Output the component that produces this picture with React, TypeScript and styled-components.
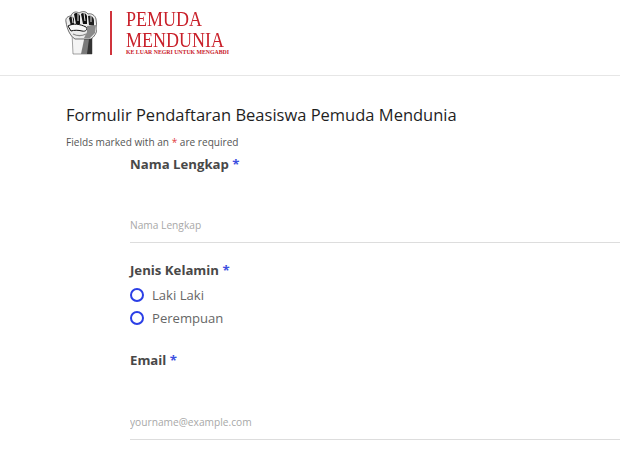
import React from 'react';
import styled, { createGlobalStyle } from 'styled-components';

const GlobalStyle = createGlobalStyle`
    html, body {
        margin: 0;
        padding: 0;
        background: #fff;
        overflow: hidden;
    }
    body {
        font-family: "Open Sans", "Liberation Sans", sans-serif;
    }
`;

const Page = styled.div`
    width: 620px;
    height: 450px;
    overflow: hidden;
`;

const Header = styled.header`
    height: 76px;
    box-sizing: border-box;
    border-bottom: 1px solid #e6e6e6;
    padding: 9px 0 0 65px;
    display: flex;
    align-items: flex-start;
`;

const Fist = styled.svg`
    width: 32px;
    height: 44px;
    margin-top: 2px;
    flex: none;
    filter: blur(0.35px);
`;

const Divider = styled.div`
    width: 2px;
    height: 44px;
    margin: 2px 14px 0 13px;
    background: #d0343c;
`;

const Brand = styled.div`
    color: #c9202a;
    font-family: "Liberation Serif", serif;
    display: flex;
    flex-direction: column;
    gap: 4px;
    padding-top: 2px;
`;

const BrandLine = styled.div`
    font-size: 20px;
    line-height: 17px;
    transform: scaleX(0.9);
    transform-origin: left center;
`;

const BrandTag = styled.div`
    font-size: 5.8px;
    font-weight: 700;
    line-height: 6px;
    margin-top: -4px;
    white-space: nowrap;
`;

const Content = styled.main`
    padding: 27px 0 0 66px;
`;

const Title = styled.h1`
    margin: 0;
    font-size: 16.5px;
    line-height: 24px;
    font-weight: 500;
    color: #1f1f1f;
    white-space: nowrap;
`;

const Note = styled.p`
    margin: 7px 0 0;
    font-size: 10.1px;
    line-height: 16px;
    color: #555;
`;

const Req = styled.span`
    color: #e2403f;
`;

const Form = styled.form`
    margin: 4px 0 0 64px;
`;

const Field = styled.div<{ $gap?: number }>`
    margin-top: ${(props) => props.$gap ?? 0}px;
`;

const Label = styled.div`
    font-size: 13.2px;
    line-height: 20px;
    font-weight: 700;
    color: #484848;
`;

const Star = styled.span`
    color: #3d50e0;
`;

const TextInput = styled.input<{ $height?: number }>`
    display: block;
    width: 100%;
    height: ${(props) => props.$height ?? 35}px;
    margin-top: 34px;
    padding: 0;
    box-sizing: border-box;
    border: 0;
    border-bottom: 1px solid #ddd;
    outline: none;
    background: transparent;
    font-family: inherit;
    font-size: 10.2px;
    &::placeholder {
        color: #a8a8a8;
        opacity: 1;
    }
`;

const Options = styled.div`
    margin-top: 3px;
`;

const Option = styled.label`
    display: flex;
    align-items: center;
    gap: 8px;
    height: 23px;
    font-size: 13.1px;
    color: #666;
`;

const Radio = styled.span`
    width: 14px;
    height: 14px;
    border: 2px solid #2b3fe6;
    border-radius: 50%;
    box-sizing: border-box;
    flex: none;
`;

function FistLogo() {
    return (
        <Fist viewBox="0 0 32 44">
            {/* wrist */}
            <path d="M7 22 L27 22 L27 43 L8 43 Z" fill="#f4f4f4" stroke="#666" strokeWidth="0.6" />
            <path d="M16 43 L20 24 L27 24 L27 43 Z" fill="#7a7a7a" />
            <path d="M22 43 L24 28 L27 26 L27 43 Z" fill="#333" />
            {/* hand */}
            <path d="M1 11 C0 7 3 5 6 5 C7 1 11 0 14 2 C17 0 21 0 23 3 C26 2 30 4 31 8 L32 17 C32 22 29 26 26 28 L10 28 C5 25 2 18 1 11 Z" fill="#ececec" stroke="#333" strokeWidth="0.7" />
            {/* finger shadows */}
            <path d="M4 7 C6 5 8 5 9 8 L9 14 L6 15 Z" fill="#1a1a1a" />
            <path d="M9 3 C11 1 14 2 15 5 L15 13 L11 13 Z" fill="#111" />
            <path d="M16 3 C18 1 21 2 22 5 L22 13 L18 13 Z" fill="#111" />
            <path d="M23 5 C26 4 29 6 29 10 L29 15 L24 14 Z" fill="#1f1f1f" />
            <path d="M7 5 L8 12 M13 2 L13 10 M19 2 L20 10 M26 5 L26 11" stroke="#e4e4e4" strokeWidth="1" fill="none" />
            {/* thumb */}
            <path d="M3 15 C8 12 15 13 21 16 C23 18 21 21 17 20 C13 19 9 19 6 20 Z" fill="#f8f8f8" stroke="#111" strokeWidth="1" />
            <path d="M22 15 L31 14 L30 22 L25 27 L19 27 L22 21 Z" fill="#8a8a8a" />
            <path d="M8 23 C12 25 17 25 21 23" stroke="#888" strokeWidth="1.2" fill="none" />
        </Fist>
    );
}

export default function App() {
    return (
        <Page>
            <GlobalStyle />
            <Header>
                <FistLogo />
                <Divider />
                <Brand>
                    <BrandLine>PEMUDA</BrandLine>
                    <BrandLine>MENDUNIA</BrandLine>
                    <BrandTag>KE LUAR NEGRI UNTUK MENGABDI</BrandTag>
                </Brand>
            </Header>
            <Content>
                <Title>Formulir Pendaftaran Beasiswa Pemuda Mendunia</Title>
                <Note>Fields marked with an <Req>*</Req> are required</Note>
                <Form>
                    <Field>
                        <Label>Nama Lengkap <Star>*</Star></Label>
                        <TextInput placeholder="Nama Lengkap" />
                    </Field>
                    <Field $gap={17}>
                        <Label>Jenis Kelamin <Star>*</Star></Label>
                        <Options>
                            <Option><Radio />Laki Laki</Option>
                            <Option><Radio />Perempuan</Option>
                        </Options>
                    </Field>
                    <Field $gap={21}>
                        <Label>Email <Star>*</Star></Label>
                        <TextInput $height={36} placeholder="yourname@example.com" />
                    </Field>
                </Form>
            </Content>
        </Page>
    );
}
